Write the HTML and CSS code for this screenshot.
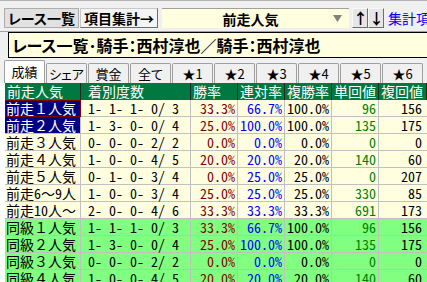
FILE: index.html
```html
<!DOCTYPE html>
<html lang="ja">
<head>
  <meta charset="UTF-8">
  <meta name="viewport" content="width=device-width, initial-scale=1.0">
  <title>項目集計</title>
  <link rel="stylesheet" href="styles.css">
</head>
<body>
  <div class="toolbar">
    <button class="btn btn-list">レース一覧</button>
    <button class="btn btn-sum">項目集計→</button>
    <div class="select">
      <span class="select-text">前走人気</span>
      <svg class="select-arrow" width="9" height="9" viewBox="0 0 9 9"><polygon points="0,1 9,1 4.5,8" fill="#808080"/></svg>
    </div>
    <button class="btn btn-arrow btn-up">↑</button>
    <button class="btn btn-arrow">↓</button>
    <span class="link">集計項目</span>
  </div>

  <div class="title">レース一覧･騎手：西村淳也／騎手：西村淳也</div>

  <div class="tabs">
    <div class="tab active">成績</div>
    <div class="tab">シェア</div>
    <div class="tab">賞金</div>
    <div class="tab">全て</div>
    <div class="tab">★1</div>
    <div class="tab">★2</div>
    <div class="tab">★3</div>
    <div class="tab">★4</div>
    <div class="tab">★5</div>
    <div class="tab">★6</div>
  </div>

  <div class="panel">
    <div class="row head">
      <div class="c">前走人気</div>
      <div class="c c2">着別度数</div>
      <div class="c">勝率</div>
      <div class="c">連対率</div>
      <div class="c">複勝率</div>
      <div class="c">単回値</div>
      <div class="c">複回値</div>
    </div>

    <div class="row">
      <div class="c name sel focus">前走１人気</div>
      <div class="c c2">1- 1- 1- 0/ 3</div>
      <div class="c num win">33.3%</div>
      <div class="c num rentai">66.7%</div>
      <div class="c num">100.0%</div>
      <div class="c num tan">96</div>
      <div class="c num">156</div>
    </div>
    <div class="row">
      <div class="c name sel">前走２人気</div>
      <div class="c c2">1- 3- 0- 0/ 4</div>
      <div class="c num win">25.0%</div>
      <div class="c num rentai">100.0%</div>
      <div class="c num">100.0%</div>
      <div class="c num tan">135</div>
      <div class="c num">175</div>
    </div>
    <div class="row">
      <div class="c name">前走３人気</div>
      <div class="c c2">0- 0- 0- 2/ 2</div>
      <div class="c num win">0.0%</div>
      <div class="c num rentai">0.0%</div>
      <div class="c num">0.0%</div>
      <div class="c num tan">0</div>
      <div class="c num">0</div>
    </div>
    <div class="row">
      <div class="c name">前走４人気</div>
      <div class="c c2">1- 0- 0- 4/ 5</div>
      <div class="c num win">20.0%</div>
      <div class="c num rentai">20.0%</div>
      <div class="c num">20.0%</div>
      <div class="c num tan">140</div>
      <div class="c num">60</div>
    </div>
    <div class="row">
      <div class="c name">前走５人気</div>
      <div class="c c2">0- 1- 0- 3/ 4</div>
      <div class="c num win">0.0%</div>
      <div class="c num rentai">25.0%</div>
      <div class="c num">25.0%</div>
      <div class="c num tan">0</div>
      <div class="c num">207</div>
    </div>
    <div class="row">
      <div class="c name">前走6〜9人</div>
      <div class="c c2">1- 0- 0- 3/ 4</div>
      <div class="c num win">25.0%</div>
      <div class="c num rentai">25.0%</div>
      <div class="c num">25.0%</div>
      <div class="c num tan">330</div>
      <div class="c num">85</div>
    </div>
    <div class="row">
      <div class="c name">前走10人〜</div>
      <div class="c c2">2- 0- 0- 4/ 6</div>
      <div class="c num win">33.3%</div>
      <div class="c num rentai">33.3%</div>
      <div class="c num">33.3%</div>
      <div class="c num tan">691</div>
      <div class="c num">173</div>
    </div>

    <div class="row green">
      <div class="c name">同級１人気</div>
      <div class="c c2">1- 1- 1- 0/ 3</div>
      <div class="c num win">33.3%</div>
      <div class="c num rentai">66.7%</div>
      <div class="c num">100.0%</div>
      <div class="c num tan">96</div>
      <div class="c num">156</div>
    </div>
    <div class="row green">
      <div class="c name">同級２人気</div>
      <div class="c c2">1- 3- 0- 0/ 4</div>
      <div class="c num win">25.0%</div>
      <div class="c num rentai">100.0%</div>
      <div class="c num">100.0%</div>
      <div class="c num tan">135</div>
      <div class="c num">175</div>
    </div>
    <div class="row green">
      <div class="c name">同級３人気</div>
      <div class="c c2">0- 0- 0- 2/ 2</div>
      <div class="c num win">0.0%</div>
      <div class="c num rentai">0.0%</div>
      <div class="c num">0.0%</div>
      <div class="c num tan">0</div>
      <div class="c num">0</div>
    </div>
    <div class="row green">
      <div class="c name">同級４人気</div>
      <div class="c c2">1- 0- 0- 4/ 5</div>
      <div class="c num win">20.0%</div>
      <div class="c num rentai">20.0%</div>
      <div class="c num">20.0%</div>
      <div class="c num tan">140</div>
      <div class="c num">60</div>
    </div>
  </div>
</body>
</html>
```

FILE: styles.css
```css
* { box-sizing: border-box; }
body {
  margin: 0;
  width: 427px;
  height: 282px;
  overflow: hidden;
  background-color: #f0f0f0;
  font-family: "Noto Sans CJK JP", sans-serif;
  color: #000;
}

/* toolbar */
.toolbar {
  display: flex;
  align-items: flex-end;
  height: 32px;
  padding: 0 0 3px 4px;
  border-top: 1px solid #b4b4b4;
  border-bottom: 1px solid #a0a0a0;
  white-space: nowrap;
  overflow: hidden;
}
.toolbar > * {
  flex-shrink: 0;
}
.btn {
  height: 20px;
  padding: 0;
  font-family: inherit;
  font-size: 14px;
  font-weight: bold;
  line-height: 18px;
  color: #000;
  background-color: #e1e1e1;
  border: 1px solid #adadad;
  font-feature-settings: "palt";
}
.btn-list {
  width: 75px;
}
.btn-sum {
  width: 78px;
  margin-left: 1px;
  background-color: #f4f4f4;
  border-color: #c8c8c8 #6e6e6e #6e6e6e #c8c8c8;
}
.select {
  display: flex;
  align-items: center;
  width: 187px;
  height: 20px;
  margin-left: 4px;
  background-color: #ffffe0;
  border-top: 1px solid #a0a0a0;
}
.select-text {
  flex: 1;
  padding-left: 12px;
  text-align: center;
  font-size: 14px;
  font-weight: bold;
  line-height: 18px;
}
.select-arrow {
  margin: 0 7px 0 6px;
}
.btn-arrow {
  width: 16px;
  font-size: 15px;
  line-height: 16px;
  background-color: #e6e6e6;
  border-color: #f8f8f8 #6e6e6e #6e6e6e #f8f8f8;
}
.btn-up {
  margin-left: 3px;
}
.link {
  margin-left: 4px;
  font-size: 14px;
  line-height: 20px;
  color: #0000ff;
}

/* title */
.title {
  height: 26px;
  margin-left: 8px;
  margin-right: -4px;
  padding-left: 3px;
  border: 1px solid #000;
  background-color: #ffffe0;
  font-size: 16px;
  font-weight: bold;
  line-height: 24px;
  white-space: nowrap;
  overflow: hidden;
  font-feature-settings: "palt";
}

/* tabs */
.tabs {
  display: flex;
  align-items: flex-end;
  height: 25px;
  padding-left: 4px;
}
.tab {
  flex-shrink: 0;
  width: 41px;
  height: 20px;
  margin-right: 1px;
  border: 1px solid #a0a0a0;
  border-bottom: none;
  border-radius: 2px 2px 0 0;
  background-color: #f0f0f0;
  font-size: 13px;
  line-height: 19px;
  text-align: center;
  font-feature-settings: "palt";
}
.tab.active {
  height: 23px;
  background-color: #fff;
  line-height: 21px;
}

/* grid */
.panel {
  padding-left: 5px;
  background-color: #fff;
}
.row {
  display: grid;
  grid-template-columns: 76px 110px 47px 47px 47px 47px 48px;
  height: 17px;
  background-color: #ffffe0;
  font-family: "Noto Sans Mono CJK JP", "Noto Sans CJK JP", monospace;
  font-size: 14px;
  line-height: 16px;
  white-space: pre;
}
.row.green {
  background-color: #80ff80;
}
.row.head {
  background-color: #007840;
  color: #fff;
  font-family: "Noto Sans CJK JP", sans-serif;
}
.c {
  padding-left: 2px;
  border-right: 1px solid #c0c0c0;
  border-bottom: 1px solid #c0c0c0;
}
.head .c {
  border-right-color: #1e2a22;
  border-bottom: none;
}
.c2 {
  padding-left: 7px;
}
.name {
  padding-left: 1px;
}
.num {
  padding: 0 2px 0 0;
  text-align: right;
}
.num:last-child {
  padding-right: 5px;
  border-right: none;
}
.sel {
  background-color: #000080;
  color: #fff;
}
.focus {
  outline: 1px solid #800000;
  outline-offset: -1px;
}
.win { color: #800000; }
.rentai { color: #0000ff; }
.tan { color: #008000; }
```
